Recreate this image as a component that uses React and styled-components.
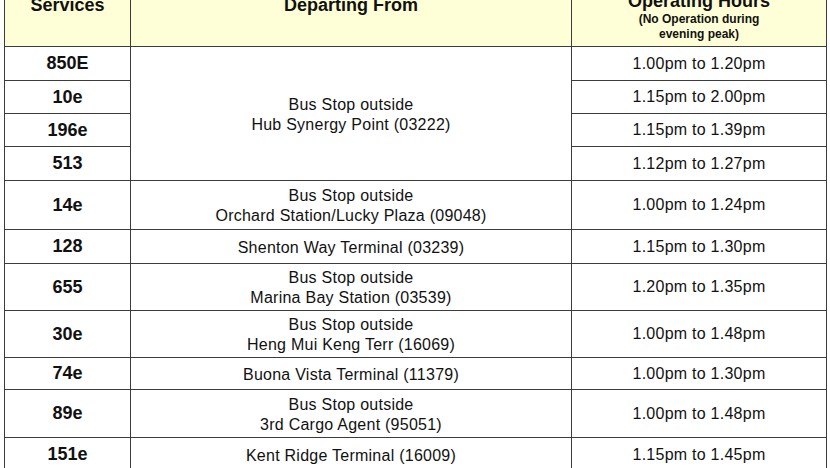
import React from 'react';
import styled, { createGlobalStyle } from 'styled-components';

const rows = [
  { service: '850E', hours: '1.00pm to 1.20pm', h: 33, from: ['Bus Stop outside', 'Hub Synergy Point (03222)'], span: 4 },
  { service: '10e', hours: '1.15pm to 2.00pm', h: 32 },
  { service: '196e', hours: '1.15pm to 1.39pm', h: 32 },
  { service: '513', hours: '1.12pm to 1.27pm', h: 33 },
  { service: '14e', hours: '1.00pm to 1.24pm', h: 48, from: ['Bus Stop outside', 'Orchard Station/Lucky Plaza (09048)'] },
  { service: '128', hours: '1.15pm to 1.30pm', h: 33, from: ['Shenton Way Terminal (03239)'] },
  { service: '655', hours: '1.20pm to 1.35pm', h: 46, from: ['Bus Stop outside', 'Marina Bay Station (03539)'] },
  { service: '30e', hours: '1.00pm to 1.48pm', h: 46, from: ['Bus Stop outside', 'Heng Mui Keng Terr (16069)'] },
  { service: '74e', hours: '1.00pm to 1.30pm', h: 31, from: ['Buona Vista Terminal (11379)'] },
  { service: '89e', hours: '1.00pm to 1.48pm', h: 47, from: ['Bus Stop outside', '3rd Cargo Agent (95051)'] },
  { service: '151e', hours: '1.15pm to 1.45pm', h: 33, from: ['Kent Ridge Terminal (16009)'] },
];

const App = () => {
  const template = ['56px', ...rows.map((r) => `${r.h}px`)].join(' ');

  return (
    <>
      <GlobalStyle />
      <Page>
        <Table $rows={template}>
          <HeadCell $pad={5}>Services</HeadCell>
          <HeadCell $pad={5}>Departing From</HeadCell>
          <HeadCell $pad={1}>
            <HeadTitle>Operating Hours</HeadTitle>
            <HeadNote>(No Operation during</HeadNote>
            <HeadNote>evening peak)</HeadNote>
          </HeadCell>

          {rows.map((r) => (
            <React.Fragment key={r.service}>
              <ServiceCell>{r.service}</ServiceCell>
              {r.from && (
                <FromCell $span={r.span || 1}>
                  {r.from.map((line) => (
                    <span key={line}>{line}</span>
                  ))}
                </FromCell>
              )}
              <HoursCell>{r.hours}</HoursCell>
            </React.Fragment>
          ))}
        </Table>
      </Page>
    </>
  );
};

export default App;

const GlobalStyle = createGlobalStyle`
  html, body {
    margin: 0;
    padding: 0;
    background: #ffffff;
    overflow: hidden;
  }
  body {
    font-family: 'Liberation Sans', Arial, sans-serif;
    color: #111111;
  }
`;

const Page = styled.div`
  width: 830px;
  height: 468px;
  overflow: hidden;
  padding-left: 4px;
  box-sizing: border-box;
`;

const Table = styled.div`
  display: grid;
  grid-template-columns: 125px 440px 254px;
  grid-template-rows: ${(p) => p.$rows};
  gap: 1px;
  padding: 1px;
  width: max-content;
  margin-top: -11px;
  background: #3c3c3c;
`;

const HeadCell = styled.div`
  background: #ffffd7;
  display: flex;
  flex-direction: column;
  align-items: center;
  padding-top: ${(p) => p.$pad}px;
  font-size: 18px;
  font-weight: 700;
  line-height: 21px;
  color: #111111;
`;

const HeadTitle = styled.div`
  font-size: 18px;
  line-height: 21px;
`;

const HeadNote = styled.div`
  font-size: 12px;
  line-height: 15px;
`;

const Cell = styled.div`
  background: #ffffff;
  display: flex;
  flex-direction: column;
  align-items: center;
  justify-content: center;
  text-align: center;
`;

const ServiceCell = styled(Cell)`
  font-size: 18px;
  font-weight: 700;
`;

const FromCell = styled(Cell)`
  grid-row: span ${(p) => p.$span};
  font-size: 16px;
  line-height: 20px;
  letter-spacing: 0.25px;
  padding-top: 2px;
`;

const HoursCell = styled(Cell)`
  font-size: 16px;
  letter-spacing: 0.25px;
`;
